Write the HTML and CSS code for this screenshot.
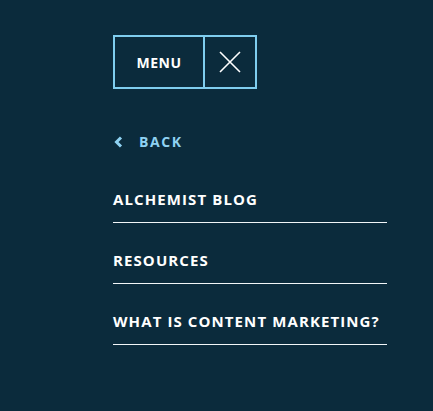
FILE: index.html
```html
<!DOCTYPE html>
<html lang="en">
	<head>
		<meta charset="UTF-8" />
		<meta name="viewport" content="width=device-width, initial-scale=1.0" />
		<title>Menu</title>
		<link rel="stylesheet" href="styles.css">
	</head>
	<body>
		<div class="container">
			<div class="menubox">
				<span class="menulabel">MENU</span>
				<button class="close" aria-label="Close">
					<svg width="22" height="22" viewBox="0 0 22 22">
						<path d="M1 1 L21 21 M21 1 L1 21" stroke="#ffffff" stroke-width="1.6" fill="none" />
					</svg>
				</button>
			</div>
			<a class="back" href="#">
				<svg width="9" height="12" viewBox="0 0 9 12">
					<path d="M7 1.5 L2.5 6 L7 10.5" stroke="#8fd2f2" stroke-width="3" fill="none" />
				</svg>
				<span>BACK</span>
			</a>
			<ul class="links">
				<li><a href="#">ALCHEMIST BLOG</a></li>
				<li><a href="#">RESOURCES</a></li>
				<li><a href="#">WHAT IS CONTENT MARKETING?</a></li>
			</ul>
		</div>
	</body>
</html>
```

FILE: styles.css
```css
* {
	margin: 0;
	padding: 0;
	box-sizing: border-box;
}
body {
	background-color: #0b2b3c;
	color: white;
	height: 100vh;
	font-family: "Open Sans", sans-serif;
}
.container {
	width: 274px;
	margin-left: 113px;
	padding-top: 35px;
	.menubox {
		display: flex;
		width: 144px;
		height: 54px;
		border: 2px solid #7fcdee;
		.menulabel {
			display: flex;
			align-items: center;
			justify-content: center;
			width: 90px;
			border-right: 2px solid #7fcdee;
			font-size: 14px;
			font-weight: 700;
			letter-spacing: 0.5px;
		}
		.close {
			flex: 1;
			display: flex;
			align-items: center;
			justify-content: center;
			background: none;
			border: none;
		}
	}
	.back {
		display: flex;
		align-items: center;
		gap: 16px;
		margin-top: 43px;
		padding-left: 1px;
		color: #8fd2f2;
		text-decoration: none;
		font-size: 14px;
		font-weight: 700;
		letter-spacing: 1.6px;
	}
	.links {
		list-style: none;
		margin-top: 37px;
		li {
			border-bottom: 1.5px solid #f2f6f8;
			padding-bottom: 12px;
			margin-bottom: 26px;
			a {
				color: #ffffff;
				text-decoration: none;
				font-size: 15px;
				font-weight: 700;
				letter-spacing: 1.1px;
				line-height: 22px;
			}
		}
	}
}
```
